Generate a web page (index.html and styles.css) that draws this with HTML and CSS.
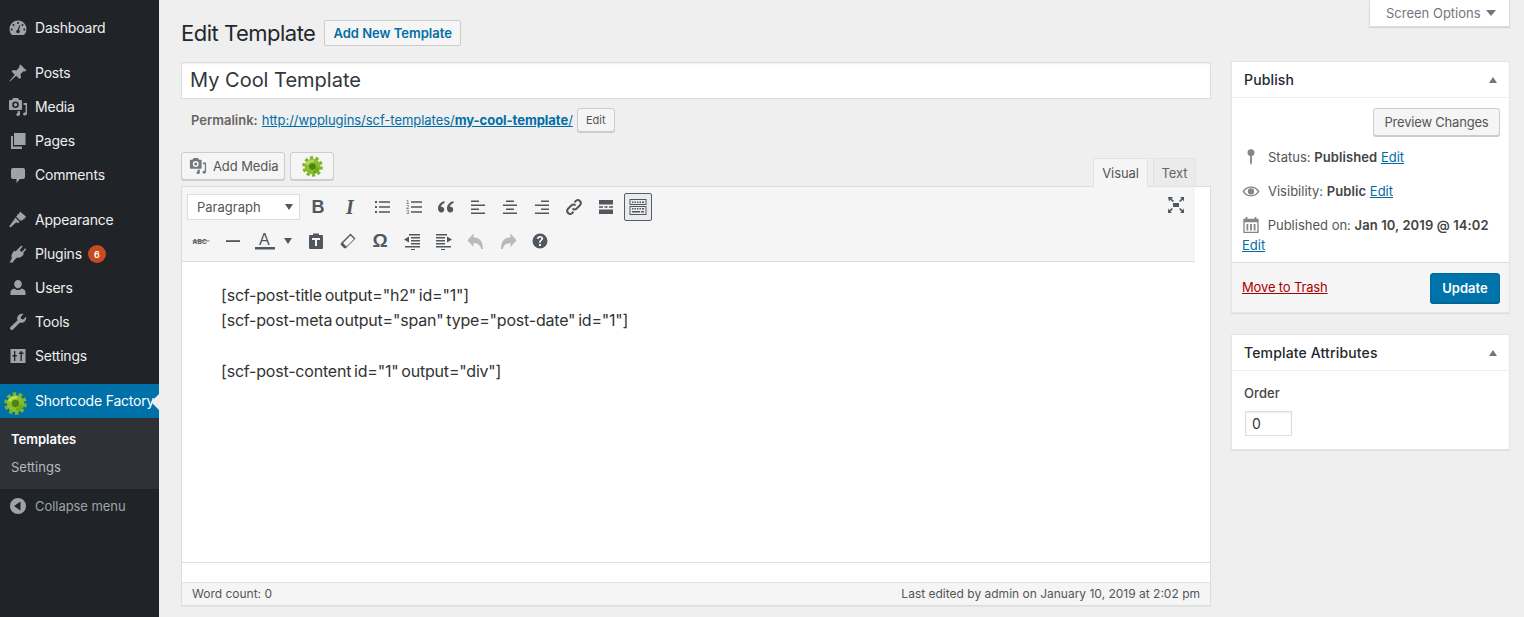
FILE: index.html
```html
<!DOCTYPE html>
<html lang="en">
<head>
<meta charset="utf-8">
<title>Edit Template</title>
<link rel="stylesheet" href="styles.css">
</head>
<body>
<svg class="defs" width="0" height="0" aria-hidden="true">
  <defs>
    <symbol id="gear" viewBox="0 0 24 24">
      <circle cx="12" cy="12" r="9.800" fill="none" stroke="#7cb524" stroke-width="4" stroke-dasharray="3.500 2.660"/>
      <circle cx="12" cy="12" r="9" fill="#86c02e"/>
      <path fill="#b4dd55" d="M4 9a8.500 8.500 0 0 1 10-4.500l-1 3a5 5 0 0 0-6 3z"/>
      <path fill="#6fa81c" d="M20 14a8.500 8.500 0 0 1-7 6l-.5-3a5 5 0 0 0 4.500-4.500z"/>
      <circle cx="12" cy="12" r="3.800" fill="#4f8412"/>
    </symbol>
    <symbol id="media" viewBox="0 0 20 20">
      <path d="M2 3h2l1-2h5l1 2h2a1 1 0 0 1 1 1v8a1 1 0 0 1-1 1H2a1 1 0 0 1-1-1V4a1 1 0 0 1 1-1zm5.500 1.500a3.300 3.300 0 1 0 0 6.600 3.300 3.300 0 0 0 0-6.600zm0 1.600a1.700 1.700 0 1 1 0 3.400 1.700 1.700 0 0 1 0-3.400z"/>
      <path d="M15.500 6H19v10.500c0 1.200-1 2-2.200 2-1 0-1.800-.6-1.800-1.500s.9-1.600 2-1.600l.6.100V8h-2.100zM9 14.500l3-.6v3.300c0 1-.9 1.800-2 1.800-1 0-1.700-.6-1.700-1.400 0-.9.800-1.500 1.700-1.500z"/>
    </symbol>
  </defs>
</svg>
<div class="shell">
  <nav class="sidebar">
    <ul class="menu">
      <li class="item">
        <svg class="ico" viewBox="0 0 20 20"><path d="M10 2.500a8.500 8.500 0 0 0-8.500 8.500c0 2.300.9 4.400 2.400 6h12.200a8.500 8.500 0 0 0 2.400-6A8.500 8.500 0 0 0 10 2.500zm0 1.500a1 1 0 1 1 0 2 1 1 0 0 1 0-2zM5.500 6a1 1 0 1 1 0 2 1 1 0 0 1 0-2zm9 0a1 1 0 1 1 0 2 1 1 0 0 1 0-2zM3.700 10.500a1 1 0 1 1 0 2 1 1 0 0 1 0-2zm12.600 0a1 1 0 1 1 0 2 1 1 0 0 1 0-2zM11.500 7l.8.300L11 12a1.800 1.800 0 0 1 .8 1.500 1.800 1.800 0 1 1-3.600 0c0-.9.600-1.600 1.500-1.800z"/></svg>
        <span>Dashboard</span>
      </li>
      <li class="sep"></li>
      <li class="item">
        <svg class="ico" viewBox="0 0 20 20"><path d="M12.500 1.500l6 6-1.500 1-1-.5-3.500 3 .5 3.500-1.500 1.500-3.300-3.300L2 18.500 1.500 18l5.300-6.200L3.500 8.500 5 7l3.500.5 3-3.500-.5-1z"/></svg>
        <span>Posts</span>
      </li>
      <li class="item">
        <svg class="ico" viewBox="0 0 20 20"><use href="#media"/></svg>
        <span>Media</span>
      </li>
      <li class="item">
        <svg class="ico" viewBox="0 0 20 20"><path d="M6 2h11.500v12H15v-1.500h-.1V2zM6 2h9v12H6zM3 5h2v10.500h9V18H3z"/></svg>
        <span>Pages</span>
      </li>
      <li class="item">
        <svg class="ico" viewBox="0 0 20 20"><path d="M5 3h10a2 2 0 0 1 2 2v7a2 2 0 0 1-2 2h-3l-3.500 4v-4H5a2 2 0 0 1-2-2V5a2 2 0 0 1 2-2z"/></svg>
        <span>Comments</span>
      </li>
      <li class="sep"></li>
      <li class="item">
        <svg class="ico" viewBox="0 0 20 20"><path d="M12 1.500l6.500 5.500-1.500.2-.3 1.800-1.400-.1-.3 1.600-1.500-.6-1 1.100L8 6.500l1.500-1-.6-1 2-.5zM7.300 7.500l4.300 4.500-1.500 1.300-1.800-1-5.800 5.200-1.300-1.300 4.500-6z"/></svg>
        <span>Appearance</span>
      </li>
      <li class="item">
        <svg class="ico" viewBox="0 0 20 20"><path d="M13.500 1.500l1.200 1-3 3.800 2.200 1.800 3.100-3.800 1.200 1-3.200 3.900 1 .9-1.300 1.500c-1.500 1.800-3.800 2.500-5.700 1.800L5.500 17l-.5 1.500H1.500l2.500-4.200C3 12.600 3.500 10 5.200 8l1.200-1.400 1 .9z"/></svg>
        <span>Plugins</span>
        <span class="badge">6</span>
      </li>
      <li class="item">
        <svg class="ico" viewBox="0 0 20 20"><path d="M10 2a3.800 3.800 0 0 1 3.800 4c0 2.200-1.600 4.500-3.800 4.500S6.200 8.200 6.200 6A3.800 3.800 0 0 1 10 2zM6.500 10.500c.9 1 2.100 1.600 3.500 1.600s2.600-.6 3.500-1.600c2.200.4 4 1.800 4 3.700V17h-15v-2.800c0-1.900 1.800-3.300 4-3.700z"/></svg>
        <span>Users</span>
      </li>
      <li class="item">
        <svg class="ico" viewBox="0 0 20 20"><path d="M14 1.800a4.700 4.700 0 0 1 1.500.2l-2.800 2.800.4 2.200 2.200.4 2.800-2.800a4.900 4.900 0 0 1-6.100 6L5 17.500a1.800 1.800 0 0 1-2.500 0 1.800 1.800 0 0 1 0-2.500l6.900-6.500A4.900 4.900 0 0 1 14 1.800z"/></svg>
        <span>Tools</span>
      </li>
      <li class="item">
        <svg class="ico" viewBox="0 0 20 20"><path fill-rule="evenodd" d="M2.500 3h15v14h-15zM6 5v4H4.500v1.500H6V15h1.300v-4.500h1.500V9H7.300V5zm6.500 0v1.500H11V8h1.500v7h1.300V8h1.700V6.500h-1.700V5z"/></svg>
        <span>Settings</span>
      </li>
      <li class="sep"></li>
      <li class="item current">
        <svg class="ico gear-ico"><use href="#gear"/></svg>
        <span>Shortcode Factory</span>
      </li>
      <li class="submenu">
        <a class="sub active">Templates</a>
        <a class="sub">Settings</a>
      </li>
      <li class="item collapse">
        <svg class="ico" viewBox="0 0 20 20"><path fill-rule="evenodd" d="M10 2a8 8 0 1 1 0 16 8 8 0 0 1 0-16zm2.500 3.500L6 10l6.500 4.500z"/></svg>
        <span>Collapse menu</span>
      </li>
    </ul>
  </nav>

  <main class="content">
    <div class="screen-tab">Screen Options <i class="caret-down"></i></div>
    <header class="heading">
      <h1 class="page-title">Edit Template</h1>
      <a class="btn-outline">Add New Template</a>
    </header>
    <div class="columns">
      <section class="primary">
        <div class="title-input">My Cool Template</div>
        <div class="permalink">
          <strong class="perma-label">Permalink:</strong>
          <a class="link perma-link">http://wpplugins/scf-templates/<strong>my-cool-template</strong>/</a>
          <button class="btn btn-small">Edit</button>
        </div>
        <div class="editor-top">
          <div class="media-btns">
            <button class="btn btn-media">
              <svg class="btn-ico" viewBox="0 0 20 20"><use href="#media"/></svg>
              Add Media
            </button>
            <button class="btn btn-gear"><svg class="gear-small"><use href="#gear"/></svg></button>
          </div>
          <div class="tabs">
            <span class="tab tab-on">Visual</span>
            <span class="tab tab-text">Text</span>
          </div>
        </div>
        <div class="editor">
          <div class="toolbar">
            <div class="tb-rows">
              <div class="tb-row">
                <div class="format">Paragraph <i class="caret-down dark small"></i></div>
                <span class="tb"><b class="g-b">B</b></span>
                <span class="tb"><i class="g-i">I</i></span>
                <span class="tb"><svg viewBox="0 0 20 20"><path d="M3 4h2v2H3zM3 9h2v2H3zM3 14h2v2H3zM7 4.300h11v1.400H7zM7 9.300h11v1.400H7zM7 14.300h11v1.400H7z"/></svg></span>
                <span class="tb"><svg viewBox="0 0 20 20"><path d="M7 4.300h11v1.400H7zM7 9.300h11v1.400H7zM7 14.300h11v1.400H7z"/><text x="2" y="7" class="num">1</text><text x="2" y="12" class="num">2</text><text x="2" y="17" class="num">3</text></svg></span>
                <span class="tb"><svg viewBox="0 0 20 20"><path d="M8.500 4C5 5 2 7.500 2 11.500c0 2.300 1.300 4 3.200 4s3-1.300 3-3-1.100-2.700-2.600-2.700c-.3 0-.6 0-.8.100.3-1.500 1.600-3 3.700-3.900zM17.500 4C14 5 11 7.500 11 11.500c0 2.300 1.300 4 3.200 4s3-1.300 3-3-1.100-2.700-2.600-2.700c-.3 0-.6 0-.8.100.3-1.500 1.600-3 3.700-3.900z"/></svg></span>
                <span class="tb"><svg viewBox="0 0 20 20"><path d="M3 3.500h8V5H3zM3 7.500h14V9H3zM3 11.500h8V13H3zM3 15.500h14V17H3z"/></svg></span>
                <span class="tb"><svg viewBox="0 0 20 20"><path d="M6 3.500h8V5H6zM3 7.500h14V9H3zM6 11.500h8V13H6zM3 15.500h14V17H3z"/></svg></span>
                <span class="tb"><svg viewBox="0 0 20 20"><path d="M9 3.500h8V5H9zM3 7.500h14V9H3zM9 11.500h8V13H9zM3 15.500h14V17H3z"/></svg></span>
                <span class="tb"><svg viewBox="0 0 20 20"><path fill="none" stroke="#50575e" stroke-width="2" d="M8.500 11.500a3 3 0 0 0 4.200 0l3.500-3.500a3 3 0 0 0-4.200-4.200l-1.500 1.500M11.500 8.500a3 3 0 0 0-4.200 0l-3.500 3.500a3 3 0 0 0 4.200 4.200l1.500-1.500"/></svg></span>
                <span class="tb"><svg viewBox="0 0 20 20"><path d="M3 3h14v4.500H3zM3 9.300h4v1.400H3zM8.500 9.300h3v1.400h-3zM13 9.300h4v1.400h-4zM3 12.500h14V17H3z"/></svg></span>
                <span class="tb tb-active"><svg viewBox="0 0 20 20"><path fill-rule="evenodd" d="M1.500 2h17v6h-17zm1 1v4h15V3zM4 4.500h1.500V6H4zM6.500 4.500H8V6H6.500zM9 4.500h1.500V6H9zM11.500 4.500H13V6h-1.500zM14 4.500h2V6h-2zM1.500 9h17v9h-17zm1 1v7h15v-7zM4 11h1.500v1.500H4zM6.500 11H8v1.500H6.500zM9 11h1.500v1.500H9zM11.500 11H13v1.500h-1.500zM14 11h2v1.500h-2zM4 14h8v1.500H4zM13 14h3v1.500h-3z"/></svg></span>
              </div>
              <div class="tb-row">
                <span class="tb"><svg viewBox="0 0 20 20"><text x="1.500" y="12.500" class="abc">ABC</text><path d="M1.500 9.500h17v.8h-17z"/></svg></span>
                <span class="tb"><svg viewBox="0 0 20 20"><path d="M3 9.200h14v1.800H3z"/></svg></span>
                <span class="tb tb-color"><svg viewBox="0 0 20 20"><text x="4" y="14" class="big-a">A</text><path d="M0 16h20v2.500H0z"/></svg><i class="caret-down dark small"></i></span>
                <span class="tb"><svg viewBox="0 0 20 20"><path fill-rule="evenodd" d="M7 2.500h6V4h3a1 1 0 0 1 1 1v12a1 1 0 0 1-1 1H4a1 1 0 0 1-1-1V5a1 1 0 0 1 1-1h3zM6 7v2h3v6h2V9h3V7z"/></svg></span>
                <span class="tb"><svg viewBox="0 0 20 20"><path fill-rule="evenodd" d="M12.500 2.500l5 5-9.500 9.500a1.500 1.500 0 0 1-2 0L3 14a1.500 1.500 0 0 1 0-2zm0 2L5 12l3.500 3.500L16 8z"/></svg></span>
                <span class="tb"><b class="g-o">Ω</b></span>
                <span class="tb"><svg viewBox="0 0 20 20"><path d="M7 3h11v1.500H7zM9 6h9v1.500H9zM9 9h9v1.500H9zM9 12h9v1.500H9zM3 15h15v1.500H3zM9 18h4v1H9zM7 5.500v6L2 8.500z"/></svg></span>
                <span class="tb"><svg viewBox="0 0 20 20"><path d="M2 3h11v1.500H2zM2 6h9v1.500H2zM2 9h9v1.500H2zM2 12h9v1.500H2zM2 15h15v1.500H2zM7 18h4v1H7zM13 5.500v6l5-3z"/></svg></span>
                <span class="tb tb-off"><svg viewBox="0 0 20 20"><path d="M7.500 2.500v4C12.500 6 17 9 17 18h-2c-.5-4-3-5.800-7.500-5.800V16L1.500 9.200z"/></svg></span>
                <span class="tb tb-off"><svg viewBox="0 0 20 20"><path d="M12.500 2.500v4C7.500 6 3 9 3 18h2c.5-4 3-5.800 7.500-5.800V16l6-6.800z"/></svg></span>
                <span class="tb"><svg viewBox="0 0 20 20"><path fill-rule="evenodd" d="M10 2.500a7.500 7.500 0 1 1 0 15 7.500 7.500 0 0 1 0-15zM9 13v2h2v-2zM10 5C8.300 5 7 6 6.800 7.800l1.800.3c.1-.9.600-1.400 1.400-1.400.7 0 1.200.4 1.200 1 0 .5-.3.800-.9 1.300-.9.700-1.300 1.300-1.300 2.500v.3h1.900V11c0-.5.200-.8.800-1.300.9-.7 1.500-1.300 1.500-2.300C13.200 6 11.900 5 10 5z"/></svg></span>
              </div>
            </div>
            <span class="tb tb-full"><svg viewBox="0 0 20 20"><path d="M7 8h6v4H7zM2 2h5L5.500 3.500 8 6 6.800 7 4.300 4.700 3 6.500zM18 2v4.500l-1.300-1.800L14.200 7 13 6l2.500-2.500L14 2zM2 18v-4.500l1.300 1.800L5.800 13 7 14l-2.500 2.500L6 18zM18 18h-4l1.500-1.500L13 14l1.200-1 2.500 2.300 1.300-1.800z"/></svg></span>
          </div>
          <div class="editor-body">
            <p>[scf-post-title output="h2" id="1"]</p>
            <p>[scf-post-meta output="span" type="post-date" id="1"]</p>
            <p>&nbsp;</p>
            <p>[scf-post-content id="1" output="div"]</p>
          </div>
          <div class="resize-strip"></div>
          <div class="statusbar">
            <span>Word count: 0</span>
            <span>Last edited by admin on January 10, 2019 at 2:02 pm</span>
          </div>
        </div>
      </section>

      <aside class="side">
        <div class="box">
          <div class="box-head"><h2>Publish</h2><i class="caret-up"></i></div>
          <div class="publish-body">
            <div class="preview-row"><button class="btn btn-preview">Preview Changes</button></div>
            <div class="meta-row">
              <svg class="meta-ico" viewBox="0 0 20 20"><path d="M10 1.500a3.700 3.700 0 0 1 1 7.300V17l-1 2-1-2V8.800a3.700 3.700 0 0 1 1-7.300z"/></svg>
              <span>Status: <b>Published</b> <a class="link">Edit</a></span>
            </div>
            <div class="meta-row">
              <svg class="meta-ico" viewBox="0 0 20 20"><path fill-rule="evenodd" d="M.500 10.500C2.500 7 6 5 10 5s7.500 2 9.500 5.500C17.500 14 14 16 10 16s-7.500-2-9.500-5.500zM2.500 10.500C4 13 6.800 14.700 10 14.700s6-1.700 7.500-4.200C16 8 13.200 6.300 10 6.300S4 8 2.500 10.500zM10 7a3.500 3.500 0 1 1 0 7 3.500 3.500 0 0 1 0-7z"/></svg>
              <span>Visibility: <b>Public</b> <a class="link">Edit</a></span>
            </div>
            <div class="meta-row date-row">
              <svg class="meta-ico" viewBox="0 0 20 20"><path fill-rule="evenodd" d="M4 1h2v2h8V1h2v2h2.500v16H1.500V3H4zM3 7v10.500h14V7zM5 9h2v7H5zM9 9h2v7H9zM13 9h2v7h-2z"/></svg>
              <span>Published on: <b>Jan 10, 2019 @ 14:02</b> <a class="link">Edit</a></span>
            </div>
          </div>
          <div class="box-foot">
            <a class="trash">Move to Trash</a>
            <button class="btn-primary">Update</button>
          </div>
        </div>
        <div class="box">
          <div class="box-head"><h2>Template Attributes</h2><i class="caret-up"></i></div>
          <div class="attr-body">
            <div class="attr-label">Order</div>
            <div class="num-input">0</div>
          </div>
        </div>
      </aside>
    </div>
  </main>
</div>
</body>
</html>
```
FILE: styles.css
```css
* { box-sizing: border-box; }
html, body { margin: 0; height: 617px; overflow: hidden; }
body { background: #efefef; font-family: Inter, "Liberation Sans", sans-serif; font-size: 13px; color: #444; }
.defs { position: absolute; }
ul { list-style: none; margin: 0; padding: 0; }

.shell { display: flex; height: 617px; }
.sidebar { width: 159px; flex: none; background: #202429; padding-top: 11px; }
.item { display: flex; align-items: center; height: 34px; color: #eee; font-size: 14px; letter-spacing: -.2px; }
.item span:first-of-type { margin-left: 7px; padding-bottom: 2px; white-space: nowrap; }
.sep { height: 11px; }
.ico { width: 20px; height: 20px; margin-left: 8px; fill: #9ea3a8; flex: none; margin-bottom: 1px; }
.badge { width: 18px; height: 18px; border-radius: 50%; background: #ca4a1f; color: #fff; font-size: 9px; font-weight: 600; display: flex; align-items: center; justify-content: center; margin-left: 6px; letter-spacing: 0; }
.current { background: #0070a8; color: #fff; position: relative; }
.current::after { content: ""; position: absolute; right: 0; top: 10px; border: 8px solid transparent; border-right-color: #efefef; border-left: 0; }
.gear-ico { width: 23px; height: 23px; margin-left: 4px; margin-top: 5px; margin-bottom: 0; }
.item.current span:first-of-type { margin-left: 8px; }
.submenu { background: #2e3237; padding: 7px 0 8px; display: flex; flex-direction: column; }
.sub { height: 28px; display: flex; align-items: center; padding-left: 11px; color: #b4b9be; font-size: 13px; }
.sub.active { color: #fff; font-weight: 600; }
.collapse { color: #9ea3a8; font-size: 13px; letter-spacing: -.05px; }
.item.collapse span:first-of-type { padding-bottom: 0; }

.content { flex: 1; min-width: 0; padding: 20px 14px 0 22px; position: relative; }
.screen-tab { position: absolute; top: 0; right: 14px; width: 141px; height: 27px; padding-left: 16px; background: #fff; border: 1px solid #ddd; border-top: 0; box-shadow: 0 1px 1px rgba(0,0,0,.1); color: #72777c; font-size: 13px; display: flex; align-items: center; gap: 5px; }
.caret-down { display: inline-block; border: 5px solid transparent; border-top: 6px solid #72777c; border-bottom: 0; }
.caret-down.dark { border-top-color: #50575e; }
.caret-down.small { border-width: 6px 4px 0; border-top-color: #50575e; }
.caret-up { border: 4.500px solid transparent; border-bottom: 6px solid #72777c; border-top: 0; }

.heading { display: flex; align-items: center; height: 26px; }
.page-title { margin: 0; font-size: 22px; font-weight: 400; color: #23282d; letter-spacing: -.5px; }
.btn-outline { margin-left: 9px; height: 26px; padding: 0 8px; border: 1px solid #ccc; background: #f5f5f5; color: #006ea5; font-weight: 600; font-size: 13px; border-radius: 2px; display: flex; align-items: center; white-space: nowrap; }

.columns { display: flex; gap: 20px; margin-top: 16px; align-items: flex-start; }
.primary { width: 1030px; flex: none; }
.side { width: 279px; flex: none; display: flex; flex-direction: column; gap: 21px; margin-top: -1px; }

.title-input { height: 37px; background: #fff; border: 1px solid #ddd; font-size: 20px; color: #32373c; padding: 0 8px 2px; display: flex; align-items: center; box-shadow: inset 0 1px 2px rgba(0,0,0,.07); }
.permalink { display: flex; align-items: center; height: 24px; margin-top: 9px; padding-left: 10px; font-size: 13px; color: #666; }
.perma-label { margin-right: 4px; font-weight: 600; }
.link { color: #006ea5; text-decoration: underline; white-space: nowrap; }
.perma-link { letter-spacing: -.04px; }
.btn { height: 28px; padding: 0 10px; border: 1px solid #ccc; border-radius: 3px; background: #f5f5f5; box-shadow: 0 1px 0 #ccc; color: #555; font: inherit; font-size: 13px; display: inline-flex; align-items: center; white-space: nowrap; }
.btn-small { height: 24px; width: 38px; padding: 0; justify-content: center; font-size: 11px; margin-left: 4px; }
.btn-preview { letter-spacing: -.2px; width: 127px; justify-content: center; }

.editor-top { display: flex; justify-content: space-between; align-items: flex-end; margin-top: 20px; height: 34px; }
.media-btns { display: flex; gap: 5px; align-self: flex-start; }
.btn-media { padding: 0 7px; gap: 6px; width: 104px; height: 28px; letter-spacing: -.1px; }
.btn-ico { width: 18px; height: 18px; fill: #72777c; flex: none; }
.btn-gear { width: 44px; justify-content: center; padding: 0; }
.gear-small { width: 21px; height: 21px; }
.tabs { display: flex; gap: 5px; padding-right: 15px; margin-bottom: -1px; position: relative; z-index: 1; }
.tab { height: 29px; width: 55px; justify-content: center; display: flex; align-items: center; border: 1px solid #e2e2e2; background: #ebebeb; color: #666; font-size: 13px; letter-spacing: -.1px; }
.tab-text { width: 43px; }
.tab-on { background: #f5f5f5; border-bottom-color: #f5f5f5; color: #555; }

.editor { background: #fff; border: 1px solid #ddd; height: 420px; display: flex; flex-direction: column; box-shadow: 0 1px 1px rgba(0,0,0,.04); }
.toolbar { height: 75px; flex: none; margin-right: 15px; background: #f5f5f5; border-bottom: 1px solid #ddd; display: flex; justify-content: space-between; padding: 6px 7px 0 5px; }
.tb-rows { display: flex; flex-direction: column; gap: 6px; }
.tb-row { display: flex; align-items: center; height: 28px; gap: 4px; }
.format { width: 113px; height: 26px; background: #fff; border: 1px solid #ddd; display: flex; align-items: center; justify-content: space-between; padding: 0 6px 0 9px; color: #555; font-size: 13px; }
.tb { width: 28px; height: 28px; display: flex; align-items: center; justify-content: center; }
.tb svg { width: 20px; height: 20px; fill: #50575e; flex: none; }
.tb-active { background: #ebebeb; border: 1px solid #555d66; border-radius: 2px; }
.tb-off svg { fill: #b8bbbe; }
.tb-color { width: 47px; justify-content: flex-start; gap: 9px; padding-left: 4px; }
.tb-full { width: 24px; margin-top: -2px; }
.g-b { font: 700 18px "Liberation Sans", sans-serif; color: #50575e; }
.g-i { font: italic 700 20px "Liberation Serif", serif; color: #50575e; }
.g-o { font: 700 19px "Liberation Sans", sans-serif; color: #50575e; }
.num { font: 6px "Liberation Sans", sans-serif; fill: #50575e; }
.abc { font: 700 6.500px "Liberation Sans", sans-serif; fill: #50575e; }
.big-a { font: 400 16px "Liberation Sans", sans-serif; fill: #50575e; }

.editor-body { flex: 1; padding: 21px 39px 0; font-size: 16px; color: #333; line-height: 25.25px; letter-spacing: -.2px; word-spacing: -1.5px; }
.editor-body p { margin: 0; }
.resize-strip { height: 20px; flex: none; border-top: 1px solid #ddd; }
.statusbar { height: 23px; flex: none; background: #f5f5f5; border-top: 1px solid #e2e2e2; padding: 0 10px 1px; display: flex; align-items: center; justify-content: space-between; font-size: 12px; color: #555; }

.box { background: #fff; border: 1px solid #e5e5e5; box-shadow: 0 1px 1px rgba(0,0,0,.06); }
.box-head { height: 36px; display: flex; align-items: center; justify-content: space-between; padding: 0 12px; border-bottom: 1px solid #eee; }
.box-head h2 { margin: 0; font-size: 14px; font-weight: 500; color: #23282d; letter-spacing: .15px; }
.publish-body { padding: 10px 9px 0 10px; }
.preview-row { display: flex; justify-content: flex-end; }
.meta-row { display: flex; align-items: flex-start; height: 34px; font-size: 13px; line-height: 20px; color: #555; }
.preview-row + .meta-row { margin-top: 11px; }
.meta-ico { width: 18px; height: 18px; fill: #82878c; flex: none; margin: 1px 8px 0 0; }
.meta-row b { font-weight: 600; color: #444; letter-spacing: .1px; }
.date-row { display: block; height: auto; padding-bottom: 7px; }
.date-row .meta-ico { display: inline-block; vertical-align: -4px; margin: 0 4px 0 0; }
.box-foot { height: 50px; background: #f5f5f5; border-top: 1px solid #ddd; display: flex; align-items: center; justify-content: space-between; padding: 0 9px 0 10px; }
.trash { color: #a00; text-decoration: underline; font-size: 13px; letter-spacing: -.15px; padding-bottom: 2px; }
.btn-primary { height: 30px; width: 70px; background: #0073aa; border: 1px solid #006799; border-radius: 3px; box-shadow: 0 1px 0 #006799; color: #fff; font: inherit; font-size: 13px; font-weight: 600; }
.attr-body { padding: 14px 12px 0; height: 78px; }
.attr-label { font-size: 13px; font-weight: 500; color: #444; line-height: 16px; letter-spacing: .1px; }
.num-input { width: 47px; height: 25px; margin: 10px 0 0 1px; border: 1px solid #ddd; padding-left: 6px; font-size: 14px; color: #32373c; display: flex; align-items: center; box-shadow: inset 0 1px 2px rgba(0,0,0,.07); }
```
